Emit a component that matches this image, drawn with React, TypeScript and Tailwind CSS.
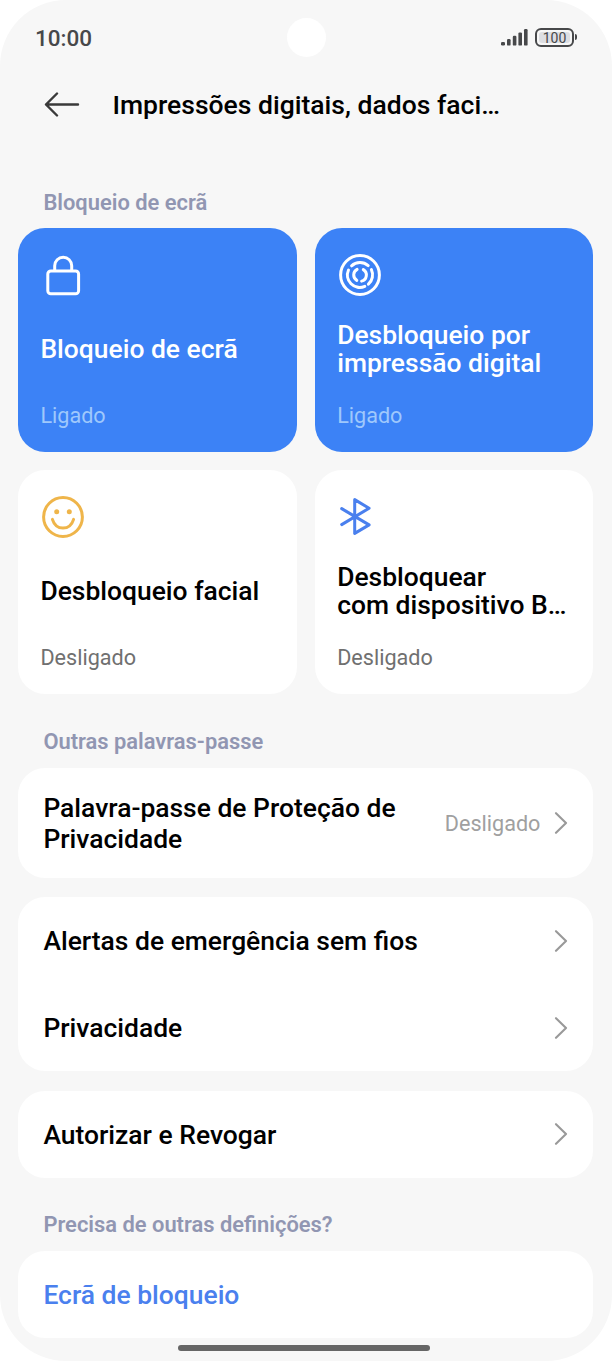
import type { ReactNode } from 'react'

function LockIcon() {
  return (
    <svg width="42" height="42" viewBox="0 0 42 42" fill="none" stroke="currentColor" strokeWidth="3">
      <rect x="5.8" y="16.9" width="30.8" height="22.8" rx="3" />
      <path d="M12.7 17v-5.2a8.5 8.5 0 0 1 17 0V17" />
    </svg>
  )
}

function FingerprintIcon() {
  return (
    <svg width="42" height="42" viewBox="0 0 42 42" fill="none" stroke="currentColor" strokeWidth="3" strokeLinecap="round">
      <circle cx="21" cy="21" r="19.4" />
      <path d="M12.6 11.8A12.4 12.4 0 0 1 29.2 11.6" />
      <path d="M9.5 16A12.4 12.4 0 0 0 25.8 32.4" />
      <path d="M32.4 15.6A12.4 12.4 0 0 1 29.4 30.2" />
      <path d="M18.1 15.4A6.3 6.3 0 0 0 17.8 26.4" />
      <path d="M24.3 15.6A6.3 6.3 0 0 1 22.6 27.1" />
    </svg>
  )
}

function FaceIcon() {
  return (
    <svg width="42" height="42" viewBox="0 0 42 42" fill="none" stroke="currentColor" strokeWidth="3" strokeLinecap="round">
      <circle cx="21" cy="21" r="19.4" />
      <circle cx="14.7" cy="15.8" r="2.5" fill="currentColor" stroke="none" />
      <circle cx="27.3" cy="15.8" r="2.5" fill="currentColor" stroke="none" />
      <path d="M10.4 23.4c3.6 11.6 17.6 11.6 21.2 0" />
    </svg>
  )
}

function BluetoothIcon() {
  return (
    <svg width="42" height="42" viewBox="0 0 42 42" fill="none" stroke="currentColor" strokeWidth="3" strokeLinecap="round" strokeLinejoin="round">
      <path d="M2.7 12.6l27.4 16.3-14.4 8.5V3.6l14.4 8.6L2.7 28.6" />
    </svg>
  )
}

function Chevron() {
  return (
    <svg className="shrink-0" width="14" height="22" viewBox="0 0 14 22" fill="none" stroke="#999999" strokeWidth="2.1" strokeLinecap="round" strokeLinejoin="round">
      <path d="M2 1.2l10 9.8-10 9.8" />
    </svg>
  )
}

function StatusBar() {
  return (
    <div className="relative flex h-[76px] items-center justify-between pr-[35px] pl-[35px] text-[#47484a]">
      <span className="pt-px text-[22.5px] font-medium">10:00</span>
      <div className="absolute top-[17.5px] left-[286.5px] size-[39px] rounded-full bg-white" />
      <div className="flex items-center pb-[2px]">
        <svg width="28" height="18" viewBox="0 0 28 18" fill="currentColor">
          <rect x="1" y="14" width="4" height="3.6" rx="1.3" />
          <rect x="7" y="11" width="3.6" height="6.6" rx="1.2" />
          <rect x="12.8" y="7.8" width="3.6" height="9.8" rx="1.2" />
          <rect x="18.4" y="4.4" width="3.6" height="13.2" rx="1.2" />
          <rect x="24" y="1" width="3.6" height="16.6" rx="1.2" />
        </svg>
        <div className="ml-[7px] flex h-[19px] w-[39px] items-center justify-center rounded-[6px] border-2 border-current p-[2px]">
          <span className="flex size-full items-center justify-center rounded-[3px] bg-[#dddee2] pt-px text-[14px] leading-none">100</span>
        </div>
        <div className="ml-px h-[6px] w-[2px] rounded-r-sm bg-current" />
      </div>
    </div>
  )
}

interface TileProps {
  icon: ReactNode
  title: ReactNode
  status: string
  active?: boolean
}

function Tile({ icon, title, status, active }: TileProps) {
  return (
    <div className={`h-[223.5px] rounded-[27px] pt-[25.7px] pl-[22px] ${active ? 'bg-[#3c82f6] text-white' : 'bg-white text-black'}`}>
      <div className="ml-[1.5px] h-[42px]">{icon}</div>
      <div className="mt-[23px] flex h-[60px] items-center text-[26.45px] leading-7 font-medium whitespace-nowrap">
        <div>{title}</div>
      </div>
      <p className={`mt-[23.8px] text-[21.6px] leading-[26px] ${active ? 'text-[#9fc8fc]' : 'text-[#707070]'}`}>{status}</p>
    </div>
  )
}

function SectionLabel({ children }: { children: ReactNode }) {
  return <h2 className="pt-px pl-[25px] text-[21.9px] leading-7 font-semibold text-[#9196b2]">{children}</h2>
}

function Row({ title }: { title: string }) {
  return (
    <div className="flex h-[87px] items-center justify-between px-[25px]">
      <span className="pt-[0.5px] text-[26.45px] font-medium text-black">{title}</span>
      <Chevron />
    </div>
  )
}

export default function App() {
  return (
    <div className="h-[1361px] w-[612px] overflow-hidden bg-white font-['Roboto',sans-serif]">
      <div className="h-full overflow-hidden rounded-[66px] bg-[#f7f7f7]">
        <StatusBar />

        <header className="flex h-[58px] items-center pl-[44px]">
          <svg width="36" height="26" viewBox="0 0 36 26" fill="none" stroke="#3a3a3a" strokeWidth="2.4" strokeLinecap="round" strokeLinejoin="round">
            <path d="M34 12.5H2M13 1.5l-11 11 11 11" />
          </svg>
          <h1 className="ml-[32.5px] pt-[0.5px] text-[26.5px] font-medium text-black">Impressões digitais, dados faci…</h1>
        </header>

        <main className="pt-[54px] pr-[18.6px] pl-[18.4px]">
          <SectionLabel>Bloqueio de ecrã</SectionLabel>
          <div className="mt-[11.3px] grid grid-cols-2 gap-[18.5px]">
            <Tile active icon={<LockIcon />} title="Bloqueio de ecrã" status="Ligado" />
            <Tile active icon={<FingerprintIcon />} title={<>Desbloqueio por<br />impressão digital</>} status="Ligado" />
            <Tile icon={<span className="text-[#efb54a]"><FaceIcon /></span>} title="Desbloqueio facial" status="Desligado" />
            <Tile icon={<span className="text-[#4a80ee]"><BluetoothIcon /></span>} title={<>Desbloquear<br />com dispositivo B…</>} status="Desligado" />
          </div>

          {/* Other passwords */}
          <div className="mt-[33px]">
            <SectionLabel>Outras palavras-passe</SectionLabel>
          </div>
          <div className="mt-[12.3px] flex h-[110px] items-center rounded-[27px] bg-white px-[25px]">
            <span className="flex-1 pt-[0.5px] text-[26.45px] leading-[31px] font-medium text-black">Palavra-passe de Proteção de<br />Privacidade</span>
            <span className="mr-[14px] pt-[2px] text-[21.6px] text-[#a0a0a0]">Desligado</span>
            <Chevron />
          </div>
          <div className="mt-[19.3px] rounded-[27px] bg-white">
            <Row title="Alertas de emergência sem fios" />
            <Row title="Privacidade" />
          </div>
          <div className="mt-[19.5px] rounded-[27px] bg-white">
            <Row title="Autorizar e Revogar" />
          </div>

          {/* Suggestions */}
          <div className="mt-[32px]">
            <SectionLabel>Precisa de outras definições?</SectionLabel>
          </div>
          <div className="mt-[12.1px] flex h-[87px] items-center rounded-[27px] bg-white pl-[25px]">
            <span className="pt-[0.5px] text-[26.45px] font-medium text-[#4a80ee]">Ecrã de bloqueio</span>
          </div>
        </main>

        <div className="mt-[7px] ml-[178px] h-[6px] w-[252px] rounded-full bg-[#666666]" />
      </div>
    </div>
  )
}
